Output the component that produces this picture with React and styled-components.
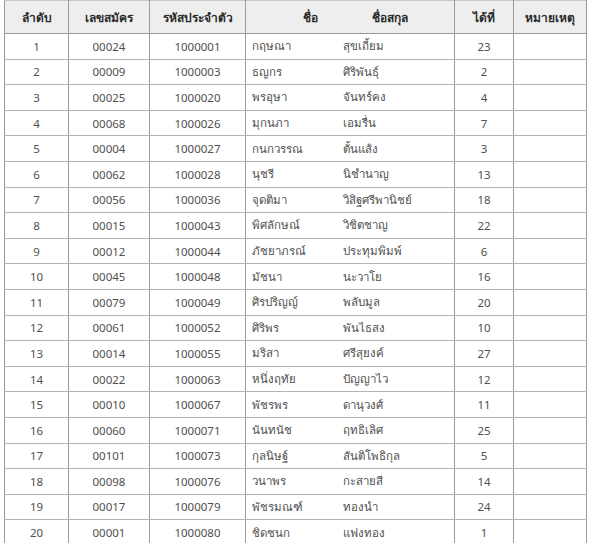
import React from "react";
import styled, { createGlobalStyle } from "styled-components";

const GlobalStyle = createGlobalStyle`
  body {
    margin: 0;
    background: #fff;
    font-family: "Noto Sans", "DejaVu Sans", sans-serif;
  }
`;

const Page = styled.div`
  padding: 0 0 0 4px;
  width: 590px;
  height: 543px;
  overflow: hidden;
  box-sizing: border-box;
`;

const Table = styled.table`
  border-collapse: collapse;
  table-layout: fixed;
  width: 582px;
  color: #505050;
  font-size: 11.5px;
`;

const HeadCell = styled.th`
  height: 32px;
  padding: 0;
  background: #eeeeee;
  color: #2b2b2b;
  font-weight: bold;
  font-size: 12px;
  text-align: ${(p) => p.align || "center"};
  padding-left: ${(p) => p.pad || 0}px;
  border-top: 1px solid #c8c8c8;
  border-bottom: 1px solid #9a9a9a;
  border-left: ${(p) => (p.noLeft ? "none" : "1px solid #9a9a9a")};
  border-right: ${(p) => (p.noRight ? "none" : "1px solid #9a9a9a")};
`;

const Cell = styled.td`
  height: 24.6px;
  padding: 0;
  padding-left: ${(p) => p.pad || 0}px;
  text-align: ${(p) => p.align || "center"};
  white-space: nowrap;
  overflow: hidden;
  border-bottom: 1px solid #b4b4b4;
  border-left: ${(p) => (p.noLeft ? "none" : "1px solid #9a9a9a")};
  border-right: ${(p) => (p.noRight ? "none" : "1px solid #9a9a9a")};
`;

const rows = [
  ["1", "00024", "1000001", "กฤษณา", "สุขเถี้ยม", "23"],
  ["2", "00009", "1000003", "ธญกร", "ศิริพันธุ์", "2"],
  ["3", "00025", "1000020", "พรอุษา", "จันทร์คง", "4"],
  ["4", "00068", "1000026", "มุกนภา", "เอมรื่น", "7"],
  ["5", "00004", "1000027", "กนกวรรณ", "ตั้นแส้ง", "3"],
  ["6", "00062", "1000028", "นุชรี", "นิชำนาญ", "13"],
  ["7", "00056", "1000036", "จุดติมา", "วิสิฐศรีพานิชย์", "18"],
  ["8", "00015", "1000043", "พิศลักษณ์", "วิชิตชาญ", "22"],
  ["9", "00012", "1000044", "ภัชยาภรณ์", "ประทุมพิมพ์", "6"],
  ["10", "00045", "1000048", "มัชนา", "นะวาโย", "16"],
  ["11", "00079", "1000049", "ศิรปริญญ์", "พลับมูล", "20"],
  ["12", "00061", "1000052", "ศิริพร", "พันไธสง", "10"],
  ["13", "00014", "1000055", "มริสา", "ศรีสุยงค์", "27"],
  ["14", "00022", "1000063", "หนึ่งฤทัย", "ปัญญาไว", "12"],
  ["15", "00010", "1000067", "พัชรพร", "ดานุวงศ์", "11"],
  ["16", "00060", "1000071", "นันทนัช", "ฤทธิเลิศ", "25"],
  ["17", "00101", "1000073", "กุลนิษฐ์", "สันติโพธิกุล", "5"],
  ["18", "00098", "1000076", "วนาพร", "กะสายสี", "14"],
  ["19", "00017", "1000079", "พัชรมณฑ์", "ทองนำ", "24"],
  ["20", "00001", "1000080", "ชิดชนก", "แฟงทอง", "1"],
];

const App = () => {
  return (
    <Page>
      <GlobalStyle />
      <Table>
        <colgroup>
          <col style={{ width: 64 }} />
          <col style={{ width: 81 }} />
          <col style={{ width: 96 }} />
          <col style={{ width: 90 }} />
          <col style={{ width: 119 }} />
          <col style={{ width: 59 }} />
          <col style={{ width: 73 }} />
        </colgroup>
        <thead>
          <tr>
            <HeadCell>ลำดับ</HeadCell>
            <HeadCell>เลขสมัคร</HeadCell>
            <HeadCell>รหัสประจำตัว</HeadCell>
            <HeadCell align="left" pad={57} noRight>
              ชื่อ
            </HeadCell>
            <HeadCell align="left" pad={36} noLeft>
              ชื่อสกุล
            </HeadCell>
            <HeadCell>ได้ที่</HeadCell>
            <HeadCell>หมายเหตุ</HeadCell>
          </tr>
        </thead>
        <tbody>
          {rows.map((r) => (
            <tr key={r[0]}>
              <Cell>{r[0]}</Cell>
              <Cell>{r[1]}</Cell>
              <Cell>{r[2]}</Cell>
              <Cell align="left" pad={6} noRight>
                {r[3]}
              </Cell>
              <Cell align="left" pad={7} noLeft>
                {r[4]}
              </Cell>
              <Cell>{r[5]}</Cell>
              <Cell />
            </tr>
          ))}
        </tbody>
      </Table>
    </Page>
  );
};

export default App;
